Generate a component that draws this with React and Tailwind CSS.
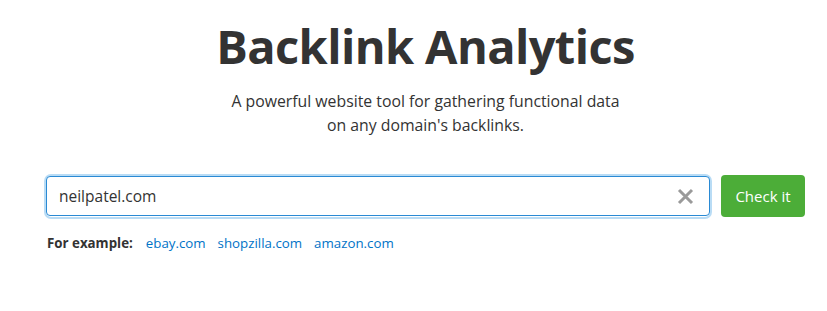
import React, { useState } from 'react';

const font = { fontFamily: '"Open Sans", "Liberation Sans", sans-serif' };

export default function App() {
    const [domain, setDomain] = useState('neilpatel.com');
    const examples = ['ebay.com', 'shopzilla.com', 'amazon.com'];

    return (
        <div className="w-[827px] h-[311px] bg-white overflow-hidden" style={font}>
            <div className="ml-[46px] w-[759px] pt-[14px]">
                <h1 className="text-center text-[47px] leading-[64px] font-bold text-[#333333] tracking-[-0.6px]">Backlink Analytics</h1>
                <p className="mt-[11px] text-center text-[15.8px] leading-[24px] text-[#333333]">
                    A powerful website tool for gathering functional data<br />on any domain's backlinks.
                </p>
                <div className="mt-[39px] flex gap-[11px]">
                    <div className="relative flex-1 rounded-[5px] ring-2 ring-[#b9dcf5]">
                        <input
                            value={domain}
                            onChange={(e) => setDomain(e.target.value)}
                            className="w-full h-[40px] rounded-[4px] border border-[#2a8ad4] pl-[12px] pr-[40px] text-[15.5px] text-[#333333] outline-none"
                            style={font}
                        />
                        <button onClick={() => setDomain('')} className="absolute right-[16px] top-[12px] text-[#9a9a9a]">
                            <svg width="17" height="17" viewBox="0 0 17 17"><path d="M2 2 L15 15 M15 2 L2 15" stroke="currentColor" strokeWidth="3" /></svg>
                        </button>
                    </div>
                    <button className="w-[84px] h-[42px] -mt-[1px] rounded-[4px] bg-[#4cad38] text-white text-[15px]">Check it</button>
                </div>
                <div className="mt-[17px] flex items-center text-[13.3px] leading-[18px]">
                    <span className="font-bold text-[#333333] ml-[1px] mr-[13px]">For example:</span>
                    {examples.map((ex) => (
                        <a key={ex} href="#" className="text-[#0073c7] mr-[12px]">{ex}</a>
                    ))}
                </div>
            </div>
        </div>
    );
}
